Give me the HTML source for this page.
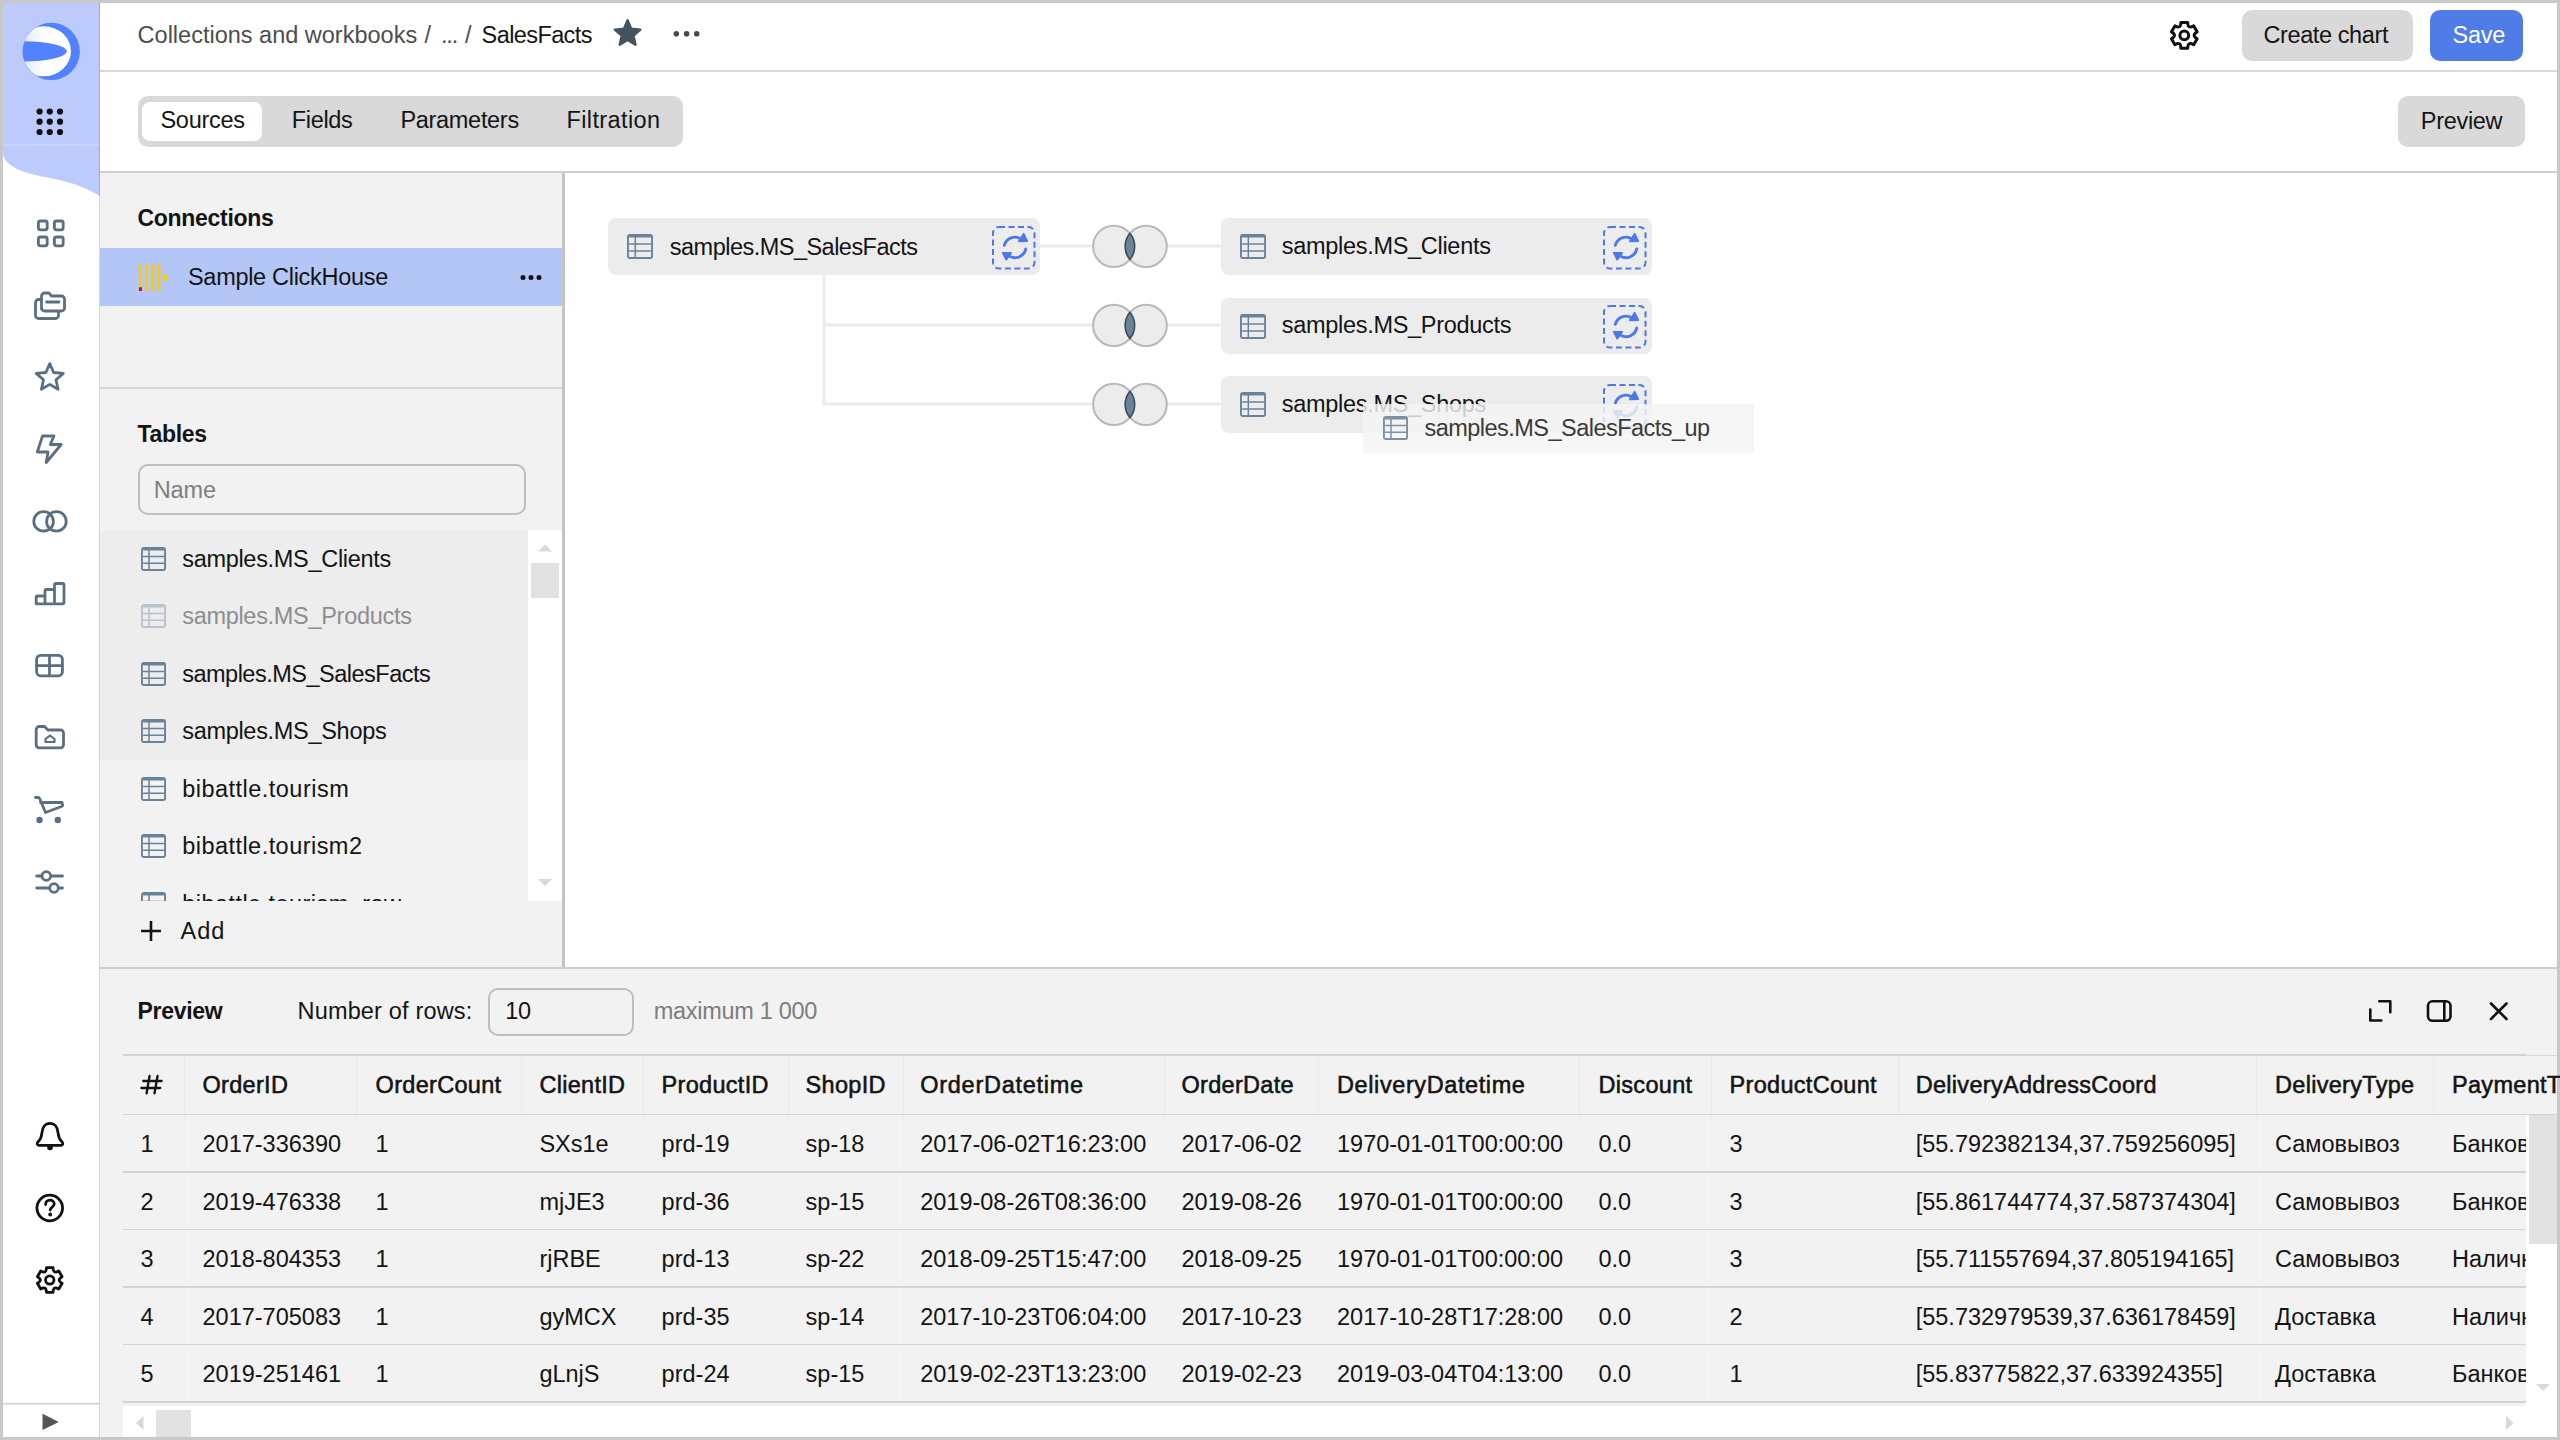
<!DOCTYPE html>
<html><head><meta charset="utf-8">
<style>
*{box-sizing:border-box;margin:0;padding:0}
html,body{width:2560px;height:1440px;overflow:hidden;background:#c8c8c8;font-family:"Liberation Sans",sans-serif;color:#141414}
.a{position:absolute}
.t{position:absolute;white-space:nowrap}
</style></head><body>
<div class="a" style="left:3px;top:3px;width:2554px;height:1434px;background:#fff"></div>

<div class="a" style="left:3px;top:3px;width:97px;height:1434px;background:#fff;border-right:1px solid #d6d6d6"></div>
<svg class="a" style="left:3px;top:3px" width="97" height="200" viewBox="3 3 97 200">
  <path d="M3 3 H100 V196 C90 190 75 183 55 179 C35 175 20 172 12 166 C6 162 3 158 3 152 Z" fill="#bccbfb"/>
  <line x1="3" y1="145" x2="100" y2="145" stroke="#cad6fc" stroke-width="1.5"/>
</svg>
<div class="a" style="left:99px;top:3px;width:1px;height:193px;background:#9aaedc"></div>
<svg class="a" style="left:0;top:0" width="100" height="1440" viewBox="0 0 100 1440">
  <defs>
    <linearGradient id="lg" x1="0" x2="1" y1="0" y2="0">
      <stop offset="0" stop-color="#dde5fd"/><stop offset="0.55" stop-color="#ffffff"/>
    </linearGradient>
    <clipPath id="lc"><circle cx="51.2" cy="51.4" r="28.6"/></clipPath>
  </defs>
  <circle cx="51.2" cy="51.4" r="28.7" fill="#5282ff"/>
  <ellipse cx="43.5" cy="51.3" rx="27.5" ry="25" fill="url(#lg)" clip-path="url(#lc)"/>
  <ellipse cx="23.5" cy="51.3" rx="43.3" ry="10.1" fill="#5282ff" clip-path="url(#lc)"/>
  <g fill="#111">
    <circle cx="39.6" cy="111.5" r="3.1"/><circle cx="49.8" cy="111.5" r="3.1"/><circle cx="60" cy="111.5" r="3.1"/>
    <circle cx="39.6" cy="121.7" r="3.1"/><circle cx="49.8" cy="121.7" r="3.1"/><circle cx="60" cy="121.7" r="3.1"/>
    <circle cx="39.6" cy="132" r="3.1"/><circle cx="49.8" cy="132" r="3.1"/><circle cx="60" cy="132" r="3.1"/>
  </g>
  <g fill="none" stroke="#5b6f82" stroke-width="2.8" stroke-linecap="round" stroke-linejoin="round">
    <rect x="38.4" y="221" width="8.8" height="8.8" rx="2"/>
    <rect x="54.4" y="221" width="8.8" height="8.8" rx="2"/>
    <rect x="38.4" y="237" width="8.8" height="8.8" rx="2"/>
    <rect x="54.4" y="237" width="8.8" height="8.8" rx="2"/>
    <path d="M41.5 309 V296 a3 3 0 0 1 3-3 H48 a2 2 0 0 1 1.5 .7 L51.5 296 H61.5 a3 3 0 0 1 3 3 V308 a3 3 0 0 1 -3 3 H44.5 a3 3 0 0 1 -3-3 Z"/>
    <path d="M46.5 302 H59"/>
    <path d="M41.5 299.5 H38.5 a3 3 0 0 0 -3 3 V315.5 a3 3 0 0 0 3 3 H55.5 a3 3 0 0 0 3-3 V311.5"/>
    <path d="M49.8 363.6 L53.6 372.5 L63.3 373.4 L56.0 379.8 L58.1 389.3 L49.8 384.4 L41.4 389.3 L43.5 379.8 L36.2 373.4 L45.9 372.5Z"/>
    <path d="M42.5 436 H54 L50.3 444.5 H61.2 L46.2 462.5 L48 452 H37.3 Z"/>
    <circle cx="43.6" cy="521.4" r="9.8"/><circle cx="56.4" cy="521.4" r="9.8"/>
    <path d="M36.2 603.8 V597.5 a1.5 1.5 0 0 1 1.5-1.5 H45 V591 a1.5 1.5 0 0 1 1.5-1.5 H54.5 V585 a1.5 1.5 0 0 1 1.5-1.5 H62.5 a1.5 1.5 0 0 1 1.5 1.5 V602.3 a1.5 1.5 0 0 1 -1.5 1.5 Z M45 603.8 V596 M54.5 603.8 V589.5"/>
    <rect x="36.6" y="655.4" width="25.8" height="20.4" rx="4"/>
    <path d="M49.5 655.4 V675.8 M36.6 665.6 H62.4"/>
    <path d="M36.2 744.5 V729.5 a3 3 0 0 1 3-3 H44.5 L48 730 H60.5 a3 3 0 0 1 3 3 V744.8 a3 3 0 0 1 -3 3 H39.2 a3 3 0 0 1 -3-3 Z"/>
    <path d="M45.5 742 V739 L50 735.5 L54.5 739 V742 Z" stroke-width="2.2"/>
    <path d="M35.5 797.5 H38 a2 2 0 0 1 1.8 1.2 L45.5 812.5 L61.5 806.5 a1.5 1.5 0 0 0 1-1.8 L62 802.5 H40.5"/>
    <path d="M36.7 876 H62.5 M36.7 888 H62.5"/>
  </g>
  <g fill="#5b6f82"><circle cx="39.5" cy="820" r="3.2"/><circle cx="57.8" cy="820" r="3.2"/></g>
  <g fill="#fff" stroke="#5b6f82" stroke-width="2.8"><circle cx="46.3" cy="876" r="4.3"/><circle cx="54" cy="888" r="4.3"/></g>
  <g fill="none" stroke="#111" stroke-width="2.8" stroke-linecap="round" stroke-linejoin="round">
    <path d="M38.8 1145.3 C37.2 1145.3 36.6 1143.4 37.9 1142.1 C40.6 1139.4 41.6 1137 41.9 1133 C42.3 1127 45.5 1123.3 50 1123.3 C54.5 1123.3 57.7 1127 58.1 1133 C58.4 1137 59.4 1139.4 62.1 1142.1 C63.4 1143.4 62.8 1145.3 61.2 1145.3 Z"/>
    <circle cx="49.75" cy="1208" r="12.8"/>
    <path d="M45.6 1204.5 C45.6 1201.8 47.5 1200.2 49.9 1200.2 C52.4 1200.2 54.2 1201.8 54.2 1204 C54.2 1207 50.2 1207.2 50.2 1210"/>
    <path d="M46.44 1267.64 L53.06 1267.64 Q53.00 1274.37 58.80 1270.95 L62.11 1276.69 Q56.25 1280.00 62.11 1283.31 L58.80 1289.05 Q53.00 1285.63 53.06 1292.36 L46.44 1292.36 Q46.50 1285.63 40.70 1289.05 L37.39 1283.31 Q43.25 1280.00 37.39 1276.69 L40.70 1270.95 Q46.50 1274.37 46.44 1267.64 Z"/>
    <circle cx="49.75" cy="1280" r="4.2"/>
  </g>
  <g fill="#111"><circle cx="50" cy="1147.5" r="2.8"/><circle cx="50.2" cy="1214.5" r="1.9"/></g>
  <line x1="3" y1="1403.8" x2="100" y2="1403.8" stroke="#d0d0d0" stroke-width="1.5"/>
  <path d="M42.5 1413.8 L58.8 1422 L42.5 1430 Z" fill="#555"/>
</svg>
<div class="a" style="left:100px;top:70px;width:2457.00px;height:2.00px;background:#dadada;"></div>
<div class="t" style="left:137.60px;top:20.86px;font-size:23.5px;line-height:29px;color:#4d4d4d;font-weight:400;letter-spacing:0px;">Collections and workbooks</div>
<div class="t" style="left:424.50px;top:20.86px;font-size:23.5px;line-height:29px;color:#4d4d4d;font-weight:400;letter-spacing:0px;">/</div>
<div class="t" style="left:441.00px;top:20.86px;font-size:23.5px;line-height:29px;color:#4d4d4d;font-weight:400;letter-spacing:-1.2px;">...</div>
<div class="t" style="left:465.00px;top:20.86px;font-size:23.5px;line-height:29px;color:#4d4d4d;font-weight:400;letter-spacing:0px;">/</div>
<div class="t" style="left:481.60px;top:20.86px;font-size:23.5px;line-height:29px;color:#141414;font-weight:400;letter-spacing:-0.6px;">SalesFacts</div>
<svg class="a" style="left:600px;top:10px" width="120" height="50" viewBox="600 10 120 50">
 <path d="M626.8 20.3 L630.4 28.8 L639.6 29.6 L632.7 35.7 L634.7 44.7 L626.8 40.0 L618.9 44.7 L620.9 35.7 L614.0 29.6 L623.2 28.8Z" fill="#46525f" stroke="#46525f" transform="translate(0.8 0)" stroke-width="2.4" stroke-linejoin="round"/>
 <circle cx="676.3" cy="33.8" r="2.8" fill="#4a4a4a"/><circle cx="686.6" cy="33.8" r="2.8" fill="#4a4a4a"/><circle cx="696.7" cy="33.8" r="2.8" fill="#4a4a4a"/>
</svg>
<svg class="a" style="left:2160px;top:10px" width="50" height="50" viewBox="2160 10 50 50">
 <path d="M2180.86 22.45 L2187.74 22.45 Q2187.70 29.41 2193.70 25.90 L2197.15 31.86 Q2191.10 35.30 2197.15 38.74 L2193.70 44.70 Q2187.70 41.19 2187.74 48.15 L2180.86 48.15 Q2180.90 41.19 2174.90 44.70 L2171.45 38.74 Q2177.50 35.30 2171.45 31.86 L2174.90 25.90 Q2180.90 29.41 2180.86 22.45 Z" fill="none" stroke="#111" stroke-width="3" stroke-linejoin="round"/>
 <circle cx="2184.3" cy="35.3" r="4.4" fill="none" stroke="#111" stroke-width="3"/>
</svg>
<div class="a" style="left:2242px;top:10px;width:171.00px;height:50.50px;background:#d9d9d9;border-radius:10px"></div>
<div class="t" style="left:2263.50px;top:20.86px;font-size:23.5px;line-height:29px;color:#141414;font-weight:400;letter-spacing:-0.4px;">Create chart</div>
<div class="a" style="left:2430px;top:10px;width:93.00px;height:50.50px;background:#507ce8;border-radius:10px"></div>
<div class="t" style="left:2452.60px;top:20.86px;font-size:23.5px;line-height:29px;color:#ffffff;font-weight:400;letter-spacing:-0.3px;">Save</div>
<div class="a" style="left:138px;top:96px;width:545.00px;height:51.00px;background:#d9d9d9;border-radius:10px"></div>
<div class="a" style="left:142px;top:102px;width:120.00px;height:39.00px;background:#ffffff;border-radius:8px"></div>
<div class="t" style="left:160.50px;top:105.86px;font-size:23.5px;line-height:29px;color:#141414;font-weight:400;letter-spacing:-0.3px;">Sources</div>
<div class="t" style="left:291.70px;top:105.86px;font-size:23.5px;line-height:29px;color:#141414;font-weight:400;letter-spacing:-0.3px;">Fields</div>
<div class="t" style="left:400.40px;top:105.86px;font-size:23.5px;line-height:29px;color:#141414;font-weight:400;letter-spacing:-0.3px;">Parameters</div>
<div class="t" style="left:566.40px;top:105.86px;font-size:23.5px;line-height:29px;color:#141414;font-weight:400;letter-spacing:0.4px;">Filtration</div>
<div class="a" style="left:2398px;top:96px;width:127.00px;height:51.00px;background:#d9d9d9;border-radius:10px"></div>
<div class="t" style="left:2420.80px;top:106.86px;font-size:23.5px;line-height:29px;color:#141414;font-weight:400;letter-spacing:-0.3px;">Preview</div>
<div class="a" style="left:100px;top:170.8px;width:2457.00px;height:2.50px;background:#cfcfcf;"></div>
<div class="a" style="left:100px;top:173.3px;width:462.00px;height:793.70px;background:#f2f2f2;"></div>
<div class="a" style="left:562px;top:173.3px;width:2.80px;height:793.70px;background:#c4c4c4;"></div>
<div class="t" style="left:137.50px;top:203.53px;font-size:23px;line-height:29px;color:#141414;font-weight:700;letter-spacing:-0.3px;">Connections</div>
<div class="a" style="left:100px;top:248px;width:462.00px;height:57.50px;background:#b4c6f6;"></div>
<svg class="a" style="left:136px;top:262px" width="34" height="32" viewBox="136 262 34 32">
 <g fill="#fdcc00"><rect x="138.9" y="264" width="3.1" height="27" rx="0.4"/><rect x="145" y="264" width="3.1" height="27" rx="0.4"/><rect x="151.1" y="264" width="3.1" height="27" rx="0.4"/><rect x="157.2" y="264" width="3.1" height="27" rx="0.4"/><rect x="163.3" y="274.2" width="3.5" height="6.6" rx="0.6"/></g>
 <rect x="138.9" y="287.3" width="3.1" height="3.7" fill="#ff0000"/>
</svg>
<div class="t" style="left:188.00px;top:262.86px;font-size:23.5px;line-height:29px;color:#141414;font-weight:400;letter-spacing:-0.3px;">Sample ClickHouse</div>
<svg class="a" style="left:516px;top:270px" width="30" height="15" viewBox="516 270 30 15"><circle cx="523" cy="277.5" r="2.5" fill="#111"/><circle cx="531" cy="277.5" r="2.5" fill="#111"/><circle cx="539" cy="277.5" r="2.5" fill="#111"/></svg>
<div class="a" style="left:100px;top:387.3px;width:462.00px;height:1.50px;background:#d6d6d6;"></div>
<div class="t" style="left:137.50px;top:419.53px;font-size:23px;line-height:29px;color:#141414;font-weight:700;letter-spacing:-0.3px;">Tables</div>
<div class="a" style="left:138px;top:464.3px;width:387.50px;height:50.30px;background:transparent;border:2px solid #bebebe;border-radius:10px"></div>
<div class="t" style="left:153.75px;top:476.36px;font-size:23.5px;line-height:29px;color:#7f7f7f;font-weight:400;letter-spacing:-0.1px;">Name</div>
<div class="a" style="left:100px;top:530px;width:428px;height:371px;overflow:hidden">
<div class="a" style="left:0;top:0.0px;width:428px;height:57.5px;background:#ededed"></div>
<svg class="a" style="left:41.25px;top:16.5px" width="25" height="24" viewBox="0 0 25 24"><rect x="0.95" y="0.95" width="23.1" height="22.1" rx="1.8" fill="none" stroke="#6a8299" stroke-width="1.9"/><path d="M2.6 2.63 H22.4 M2.6 9.48 H22.4 M2.6 16.32 H22.4 M8.00 2.63 V22.5" stroke="#6a8299" stroke-width="1.5" fill="none" stroke-linecap="round"/></svg>
<div class="t" style="left:82.2px;top:14.86px;font-size:23.5px;line-height:29px;color:#141414;letter-spacing:-0.3px">samples.MS_Clients</div>
<div class="a" style="left:0;top:57.5px;width:428px;height:57.5px;background:#ededed"></div>
<svg class="a" style="left:41.25px;top:74.0px" width="25" height="24" viewBox="0 0 25 24"><rect x="0.95" y="0.95" width="23.1" height="22.1" rx="1.8" fill="none" stroke="#b8c3ce" stroke-width="1.9"/><path d="M2.6 2.63 H22.4 M2.6 9.48 H22.4 M2.6 16.32 H22.4 M8.00 2.63 V22.5" stroke="#b8c3ce" stroke-width="1.5" fill="none" stroke-linecap="round"/></svg>
<div class="t" style="left:82.2px;top:72.36px;font-size:23.5px;line-height:29px;color:#8e8e8e;letter-spacing:-0.3px">samples.MS_Products</div>
<div class="a" style="left:0;top:115.0px;width:428px;height:57.5px;background:#ededed"></div>
<svg class="a" style="left:41.25px;top:131.5px" width="25" height="24" viewBox="0 0 25 24"><rect x="0.95" y="0.95" width="23.1" height="22.1" rx="1.8" fill="none" stroke="#6a8299" stroke-width="1.9"/><path d="M2.6 2.63 H22.4 M2.6 9.48 H22.4 M2.6 16.32 H22.4 M8.00 2.63 V22.5" stroke="#6a8299" stroke-width="1.5" fill="none" stroke-linecap="round"/></svg>
<div class="t" style="left:82.2px;top:129.86px;font-size:23.5px;line-height:29px;color:#141414;letter-spacing:-0.5px">samples.MS_SalesFacts</div>
<div class="a" style="left:0;top:172.5px;width:428px;height:57.5px;background:#ededed"></div>
<svg class="a" style="left:41.25px;top:189.0px" width="25" height="24" viewBox="0 0 25 24"><rect x="0.95" y="0.95" width="23.1" height="22.1" rx="1.8" fill="none" stroke="#6a8299" stroke-width="1.9"/><path d="M2.6 2.63 H22.4 M2.6 9.48 H22.4 M2.6 16.32 H22.4 M8.00 2.63 V22.5" stroke="#6a8299" stroke-width="1.5" fill="none" stroke-linecap="round"/></svg>
<div class="t" style="left:82.2px;top:187.36px;font-size:23.5px;line-height:29px;color:#141414;letter-spacing:-0.3px">samples.MS_Shops</div>
<svg class="a" style="left:41.25px;top:246.5px" width="25" height="24" viewBox="0 0 25 24"><rect x="0.95" y="0.95" width="23.1" height="22.1" rx="1.8" fill="none" stroke="#6a8299" stroke-width="1.9"/><path d="M2.6 2.63 H22.4 M2.6 9.48 H22.4 M2.6 16.32 H22.4 M8.00 2.63 V22.5" stroke="#6a8299" stroke-width="1.5" fill="none" stroke-linecap="round"/></svg>
<div class="t" style="left:82.2px;top:244.86px;font-size:23.5px;line-height:29px;color:#141414;letter-spacing:0.48px">bibattle.tourism</div>
<svg class="a" style="left:41.25px;top:304.0px" width="25" height="24" viewBox="0 0 25 24"><rect x="0.95" y="0.95" width="23.1" height="22.1" rx="1.8" fill="none" stroke="#6a8299" stroke-width="1.9"/><path d="M2.6 2.63 H22.4 M2.6 9.48 H22.4 M2.6 16.32 H22.4 M8.00 2.63 V22.5" stroke="#6a8299" stroke-width="1.5" fill="none" stroke-linecap="round"/></svg>
<div class="t" style="left:82.2px;top:302.36px;font-size:23.5px;line-height:29px;color:#141414;letter-spacing:0.46px">bibattle.tourism2</div>
<svg class="a" style="left:41.25px;top:361.5px" width="25" height="24" viewBox="0 0 25 24"><rect x="0.95" y="0.95" width="23.1" height="22.1" rx="1.8" fill="none" stroke="#6a8299" stroke-width="1.9"/><path d="M2.6 2.63 H22.4 M2.6 9.48 H22.4 M2.6 16.32 H22.4 M8.00 2.63 V22.5" stroke="#6a8299" stroke-width="1.5" fill="none" stroke-linecap="round"/></svg>
<div class="t" style="left:82.2px;top:359.86px;font-size:23.5px;line-height:29px;color:#141414;letter-spacing:0.45px">bibattle.tourism_raw</div>
</div>
<div class="a" style="left:528px;top:530px;width:34.00px;height:371.00px;background:#ffffff;"></div>
<div class="a" style="left:531px;top:563px;width:28.00px;height:34.50px;background:#e1e1e1;"></div>
<svg class="a" style="left:535px;top:540px" width="20" height="350" viewBox="535 540 20 350"><path d="M538 551.5 L545 544.5 L552 551.5Z" fill="#d9d9d9"/><path d="M538 879 L545 886 L552 879Z" fill="#d9d9d9"/></svg>
<svg class="a" style="left:138px;top:918px" width="26" height="26" viewBox="138 918 26 26"><path d="M151 921 V941 M141 931 H161" stroke="#141414" stroke-width="2.6" fill="none"/></svg>
<div class="t" style="left:180.60px;top:916.76px;font-size:23.5px;line-height:29px;color:#141414;font-weight:400;letter-spacing:0.9px;">Add</div>
<svg class="a" style="left:565px;top:173px" width="1992" height="794" viewBox="565 173 1992 794">
 <g stroke="#ebebeb" stroke-width="3" fill="none">
  <path d="M1040 246 H1095 M1165 246 H1222"/>
  <path d="M824 275 V404 H1095 M824 325 H1095 M1165 325 H1222 M1165 404 H1222"/>
 </g>

 <circle cx="1113.8" cy="246.4" r="20.7" fill="#ececec" stroke="#b8b8b8" stroke-width="2"/>
 <circle cx="1146.1" cy="246.4" r="20.7" fill="#ececec" stroke="#b8b8b8" stroke-width="2"/>
 <path d="M1129.95 233.20 A20.7 20.7 0 0 1 1129.95 259.60 A20.7 20.7 0 0 1 1129.95 233.20 Z" fill="#6a829a" stroke="#3a4957" stroke-width="1.5" stroke-linejoin="round"/>
 <circle cx="1113.8" cy="325.4" r="20.7" fill="#ececec" stroke="#b8b8b8" stroke-width="2"/>
 <circle cx="1146.1" cy="325.4" r="20.7" fill="#ececec" stroke="#b8b8b8" stroke-width="2"/>
 <path d="M1129.95 312.20 A20.7 20.7 0 0 1 1129.95 338.60 A20.7 20.7 0 0 1 1129.95 312.20 Z" fill="#6a829a" stroke="#3a4957" stroke-width="1.5" stroke-linejoin="round"/>
 <circle cx="1113.8" cy="404.4" r="20.7" fill="#ececec" stroke="#b8b8b8" stroke-width="2"/>
 <circle cx="1146.1" cy="404.4" r="20.7" fill="#ececec" stroke="#b8b8b8" stroke-width="2"/>
 <path d="M1129.95 391.20 A20.7 20.7 0 0 1 1129.95 417.60 A20.7 20.7 0 0 1 1129.95 391.20 Z" fill="#6a829a" stroke="#3a4957" stroke-width="1.5" stroke-linejoin="round"/>
</svg>
<div class="a" style="left:608px;top:217.7px;width:432.00px;height:57.10px;background:#ececec;border-radius:8px"></div>
<svg class="a" style="left:627px;top:233.95px" width="26" height="25" viewBox="0 0 26 25"><rect x="0.95" y="0.95" width="24.1" height="23.1" rx="1.8" fill="none" stroke="#6a8299" stroke-width="1.9"/><path d="M2.6 2.70 H23.4 M2.6 9.88 H23.4 M2.6 17.00 H23.4 M8.32 2.70 V23.5" stroke="#6a8299" stroke-width="1.5" fill="none" stroke-linecap="round"/></svg>
<div class="t" style="left:669.80px;top:232.56px;font-size:23.5px;line-height:29px;color:#141414;font-weight:400;letter-spacing:-0.52px;">samples.MS_SalesFacts</div>
<svg class="a" style="left:991.5px;top:225.5px" width="44" height="44" viewBox="0 0 44 44">
 <rect x="1" y="1" width="41.5" height="41.5" rx="6" fill="none" stroke="#4d79e6" stroke-width="2" stroke-dasharray="6 3.5"/>
 <path d="M12.3 19.3 A11 11 0 0 1 29.2 13.2" fill="none" stroke="#4d79e6" stroke-width="2.9" stroke-linecap="round"/>
 <path d="M31.7 7.8 L35.2 15.1 L26.9 15.3 Z" fill="#4d79e6" stroke="#4d79e6" stroke-width="1.8" stroke-linejoin="round"/>
 <path d="M33.8 22.9 A11 11 0 0 1 17.6 30.3" fill="none" stroke="#4d79e6" stroke-width="2.9" stroke-linecap="round"/>
 <path d="M10.8 26.9 L19.1 26.9 L14.2 33.6 Z" fill="#4d79e6" stroke="#4d79e6" stroke-width="1.8" stroke-linejoin="round"/>
</svg>
<div class="a" style="left:1221px;top:218px;width:431.40px;height:56.60px;background:#ececec;border-radius:8px"></div>
<svg class="a" style="left:1240.4px;top:234.0px" width="26" height="25" viewBox="0 0 26 25"><rect x="0.95" y="0.95" width="24.1" height="23.1" rx="1.8" fill="none" stroke="#6a8299" stroke-width="1.9"/><path d="M2.6 2.70 H23.4 M2.6 9.88 H23.4 M2.6 17.00 H23.4 M8.32 2.70 V23.5" stroke="#6a8299" stroke-width="1.5" fill="none" stroke-linecap="round"/></svg>
<div class="t" style="left:1281.80px;top:232.36px;font-size:23.5px;line-height:29px;color:#141414;font-weight:400;letter-spacing:-0.3px;">samples.MS_Clients</div>
<svg class="a" style="left:1602.7px;top:225.7px" width="44" height="44" viewBox="0 0 44 44">
 <rect x="1" y="1" width="41.5" height="41.5" rx="6" fill="none" stroke="#4d79e6" stroke-width="2" stroke-dasharray="6 3.5"/>
 <path d="M12.3 19.3 A11 11 0 0 1 29.2 13.2" fill="none" stroke="#4d79e6" stroke-width="2.9" stroke-linecap="round"/>
 <path d="M31.7 7.8 L35.2 15.1 L26.9 15.3 Z" fill="#4d79e6" stroke="#4d79e6" stroke-width="1.8" stroke-linejoin="round"/>
 <path d="M33.8 22.9 A11 11 0 0 1 17.6 30.3" fill="none" stroke="#4d79e6" stroke-width="2.9" stroke-linecap="round"/>
 <path d="M10.8 26.9 L19.1 26.9 L14.2 33.6 Z" fill="#4d79e6" stroke="#4d79e6" stroke-width="1.8" stroke-linejoin="round"/>
</svg>
<div class="a" style="left:1221px;top:297.8px;width:431.40px;height:56.70px;background:#ececec;border-radius:8px"></div>
<svg class="a" style="left:1240.4px;top:313.84999999999997px" width="26" height="25" viewBox="0 0 26 25"><rect x="0.95" y="0.95" width="24.1" height="23.1" rx="1.8" fill="none" stroke="#6a8299" stroke-width="1.9"/><path d="M2.6 2.70 H23.4 M2.6 9.88 H23.4 M2.6 17.00 H23.4 M8.32 2.70 V23.5" stroke="#6a8299" stroke-width="1.5" fill="none" stroke-linecap="round"/></svg>
<div class="t" style="left:1281.80px;top:311.26px;font-size:23.5px;line-height:29px;color:#141414;font-weight:400;letter-spacing:-0.3px;">samples.MS_Products</div>
<svg class="a" style="left:1602.7px;top:305.0px" width="44" height="44" viewBox="0 0 44 44">
 <rect x="1" y="1" width="41.5" height="41.5" rx="6" fill="none" stroke="#4d79e6" stroke-width="2" stroke-dasharray="6 3.5"/>
 <path d="M12.3 19.3 A11 11 0 0 1 29.2 13.2" fill="none" stroke="#4d79e6" stroke-width="2.9" stroke-linecap="round"/>
 <path d="M31.7 7.8 L35.2 15.1 L26.9 15.3 Z" fill="#4d79e6" stroke="#4d79e6" stroke-width="1.8" stroke-linejoin="round"/>
 <path d="M33.8 22.9 A11 11 0 0 1 17.6 30.3" fill="none" stroke="#4d79e6" stroke-width="2.9" stroke-linecap="round"/>
 <path d="M10.8 26.9 L19.1 26.9 L14.2 33.6 Z" fill="#4d79e6" stroke="#4d79e6" stroke-width="1.8" stroke-linejoin="round"/>
</svg>
<div class="a" style="left:1221px;top:376.3px;width:431.40px;height:56.70px;background:#ececec;border-radius:8px"></div>
<svg class="a" style="left:1240.4px;top:392.34999999999997px" width="26" height="25" viewBox="0 0 26 25"><rect x="0.95" y="0.95" width="24.1" height="23.1" rx="1.8" fill="none" stroke="#6a8299" stroke-width="1.9"/><path d="M2.6 2.70 H23.4 M2.6 9.88 H23.4 M2.6 17.00 H23.4 M8.32 2.70 V23.5" stroke="#6a8299" stroke-width="1.5" fill="none" stroke-linecap="round"/></svg>
<div class="t" style="left:1281.80px;top:390.46px;font-size:23.5px;line-height:29px;color:#141414;font-weight:400;letter-spacing:-0.3px;">samples.MS_Shops</div>
<svg class="a" style="left:1602.7px;top:383.7px" width="44" height="44" viewBox="0 0 44 44">
 <rect x="1" y="1" width="41.5" height="41.5" rx="6" fill="none" stroke="#4d79e6" stroke-width="2" stroke-dasharray="6 3.5"/>
 <path d="M12.3 19.3 A11 11 0 0 1 29.2 13.2" fill="none" stroke="#4d79e6" stroke-width="2.9" stroke-linecap="round"/>
 <path d="M31.7 7.8 L35.2 15.1 L26.9 15.3 Z" fill="#4d79e6" stroke="#4d79e6" stroke-width="1.8" stroke-linejoin="round"/>
 <path d="M33.8 22.9 A11 11 0 0 1 17.6 30.3" fill="none" stroke="#4d79e6" stroke-width="2.9" stroke-linecap="round"/>
 <path d="M10.8 26.9 L19.1 26.9 L14.2 33.6 Z" fill="#4d79e6" stroke="#4d79e6" stroke-width="1.8" stroke-linejoin="round"/>
</svg>
<div class="a" style="left:1363px;top:404px;width:391.00px;height:48.60px;background:rgba(244,244,244,0.82);"></div>
<svg class="a" style="left:1383px;top:416px" width="25" height="24" viewBox="0 0 25 24"><rect x="0.95" y="0.95" width="23.1" height="22.1" rx="1.8" fill="none" stroke="#7d90a3" stroke-width="1.9"/><path d="M2.6 2.63 H22.4 M2.6 9.48 H22.4 M2.6 16.32 H22.4 M8.00 2.63 V22.5" stroke="#7d90a3" stroke-width="1.5" fill="none" stroke-linecap="round"/></svg>
<div class="t" style="left:1424.50px;top:414.16px;font-size:23.5px;line-height:29px;color:#3a3a3a;font-weight:400;letter-spacing:-0.53px;">samples.MS_SalesFacts_up</div>
<div class="a" style="left:100px;top:966.5px;width:2457.00px;height:2.50px;background:#cdcdcd;"></div>
<div class="a" style="left:100px;top:969px;width:2457.00px;height:468.00px;background:#f2f2f2;"></div>
<div class="t" style="left:137.50px;top:996.93px;font-size:23px;line-height:29px;color:#141414;font-weight:700;letter-spacing:-0.3px;">Preview</div>
<div class="t" style="left:297.50px;top:996.76px;font-size:23.5px;line-height:29px;color:#141414;font-weight:400;letter-spacing:0.17px;">Number of rows:</div>
<div class="a" style="left:488.4px;top:987.5px;width:146.00px;height:48.50px;background:transparent;border:2px solid #bebebe;border-radius:10px"></div>
<div class="t" style="left:505.30px;top:996.76px;font-size:23.5px;line-height:29px;color:#141414;font-weight:400;letter-spacing:-0.3px;">10</div>
<div class="t" style="left:653.75px;top:996.76px;font-size:23.5px;line-height:29px;color:#7d7d7d;font-weight:400;letter-spacing:-0.3px;">maximum 1 000</div>
<svg class="a" style="left:2360px;top:990px" width="160" height="42" viewBox="2360 990 160 42">
 <g fill="none" stroke="#111" stroke-width="2.6" stroke-linejoin="round">
  <path d="M2370.3 1009.5 V1020.5 H2381.3" stroke-linecap="round"/>
  <path d="M2379.3 1001.3 H2390.3 V1012.3" stroke-linecap="round"/>
  <rect x="2428" y="1001.3" width="22.5" height="19.5" rx="4.5"/>
  <path d="M2444.3 1001.3 V1020.8"/>
  <path d="M2491 1003.5 L2506.5 1019 M2506.5 1003.5 L2491 1019" stroke-linecap="round"/>
 </g>
</svg>
<div class="a" style="left:123px;top:1054px;width:2403.00px;height:1.50px;background:#d3d3d3;"></div>
<div class="a" style="left:2526px;top:1055px;width:31.00px;height:1.00px;background:#dadada;"></div>
<div class="a" style="left:123px;top:1113.8px;width:2434.00px;height:1.50px;background:#d3d3d3;"></div>
<div class="a" style="left:183.5px;top:1055.5px;width:1.00px;height:58.30px;background:#eaeaea;"></div>
<div class="a" style="left:356px;top:1055.5px;width:1.00px;height:58.30px;background:#eaeaea;"></div>
<div class="a" style="left:521px;top:1055.5px;width:1.00px;height:58.30px;background:#eaeaea;"></div>
<div class="a" style="left:643px;top:1055.5px;width:1.00px;height:58.30px;background:#eaeaea;"></div>
<div class="a" style="left:787.5px;top:1055.5px;width:1.00px;height:58.30px;background:#eaeaea;"></div>
<div class="a" style="left:902.5px;top:1055.5px;width:1.00px;height:58.30px;background:#eaeaea;"></div>
<div class="a" style="left:1163.5px;top:1055.5px;width:1.00px;height:58.30px;background:#eaeaea;"></div>
<div class="a" style="left:1318px;top:1055.5px;width:1.00px;height:58.30px;background:#eaeaea;"></div>
<div class="a" style="left:1579.4px;top:1055.5px;width:1.00px;height:58.30px;background:#eaeaea;"></div>
<div class="a" style="left:1710.5px;top:1055.5px;width:1.00px;height:58.30px;background:#eaeaea;"></div>
<div class="a" style="left:1897.5px;top:1055.5px;width:1.00px;height:58.30px;background:#eaeaea;"></div>
<div class="a" style="left:2256px;top:1055.5px;width:1.00px;height:58.30px;background:#eaeaea;"></div>
<div class="a" style="left:2433px;top:1055.5px;width:1.00px;height:58.30px;background:#eaeaea;"></div>
<svg class="a" style="left:135px;top:1070px" width="32" height="30" viewBox="135 1070 32 30"><path d="M149.6 1075.8 L146.6 1093.3 M157.6 1075.8 L154.5 1093.3 M143.3 1081 H161.6 M141.4 1088 H160.2" stroke="#111" stroke-width="2.3" stroke-linecap="round" fill="none"/></svg>
<div class="t" style="left:202.50px;top:1070.96px;font-size:23.5px;line-height:29px;color:#141414;font-weight:400;letter-spacing:0.3px;-webkit-text-stroke:0.55px #141414">OrderID</div>
<div class="t" style="left:375.60px;top:1070.96px;font-size:23.5px;line-height:29px;color:#141414;font-weight:400;letter-spacing:0.3px;-webkit-text-stroke:0.55px #141414">OrderCount</div>
<div class="t" style="left:539.40px;top:1070.96px;font-size:23.5px;line-height:29px;color:#141414;font-weight:400;letter-spacing:0.3px;-webkit-text-stroke:0.55px #141414">ClientID</div>
<div class="t" style="left:661.60px;top:1070.96px;font-size:23.5px;line-height:29px;color:#141414;font-weight:400;letter-spacing:0.3px;-webkit-text-stroke:0.55px #141414">ProductID</div>
<div class="t" style="left:805.60px;top:1070.96px;font-size:23.5px;line-height:29px;color:#141414;font-weight:400;letter-spacing:0.3px;-webkit-text-stroke:0.55px #141414">ShopID</div>
<div class="t" style="left:920.20px;top:1070.96px;font-size:23.5px;line-height:29px;color:#141414;font-weight:400;letter-spacing:0.74px;-webkit-text-stroke:0.55px #141414">OrderDatetime</div>
<div class="t" style="left:1181.50px;top:1070.96px;font-size:23.5px;line-height:29px;color:#141414;font-weight:400;letter-spacing:0.3px;-webkit-text-stroke:0.55px #141414">OrderDate</div>
<div class="t" style="left:1337.00px;top:1070.96px;font-size:23.5px;line-height:29px;color:#141414;font-weight:400;letter-spacing:0.6px;-webkit-text-stroke:0.55px #141414">DeliveryDatetime</div>
<div class="t" style="left:1598.50px;top:1070.96px;font-size:23.5px;line-height:29px;color:#141414;font-weight:400;letter-spacing:0.3px;-webkit-text-stroke:0.55px #141414">Discount</div>
<div class="t" style="left:1729.60px;top:1070.96px;font-size:23.5px;line-height:29px;color:#141414;font-weight:400;letter-spacing:0.3px;-webkit-text-stroke:0.55px #141414">ProductCount</div>
<div class="t" style="left:1915.70px;top:1070.96px;font-size:23.5px;line-height:29px;color:#141414;font-weight:400;letter-spacing:0.3px;-webkit-text-stroke:0.55px #141414">DeliveryAddressCoord</div>
<div class="t" style="left:2275.00px;top:1070.96px;font-size:23.5px;line-height:29px;color:#141414;font-weight:400;letter-spacing:0.3px;-webkit-text-stroke:0.55px #141414">DeliveryType</div>
<div class="t" style="left:2452.00px;top:1070.96px;font-size:23.5px;line-height:29px;color:#141414;font-weight:400;letter-spacing:0.3px;-webkit-text-stroke:0.55px #141414">PaymentType</div>
<div class="a" style="left:0;top:0;width:2526px;height:1406px;overflow:hidden">
<div class="a" style="left:123px;top:1171px;width:2403.00px;height:1.50px;background:#d3d3d3;"></div>
<div class="a" style="left:183.5px;top:1115px;width:1.00px;height:56.00px;background:#efefef;"></div>
<div class="a" style="left:356px;top:1115px;width:1.00px;height:56.00px;background:#efefef;"></div>
<div class="a" style="left:521px;top:1115px;width:1.00px;height:56.00px;background:#efefef;"></div>
<div class="a" style="left:643px;top:1115px;width:1.00px;height:56.00px;background:#efefef;"></div>
<div class="a" style="left:787.5px;top:1115px;width:1.00px;height:56.00px;background:#efefef;"></div>
<div class="a" style="left:902.5px;top:1115px;width:1.00px;height:56.00px;background:#efefef;"></div>
<div class="a" style="left:1163.5px;top:1115px;width:1.00px;height:56.00px;background:#efefef;"></div>
<div class="a" style="left:1318px;top:1115px;width:1.00px;height:56.00px;background:#efefef;"></div>
<div class="a" style="left:1579.4px;top:1115px;width:1.00px;height:56.00px;background:#efefef;"></div>
<div class="a" style="left:1710.5px;top:1115px;width:1.00px;height:56.00px;background:#efefef;"></div>
<div class="a" style="left:1897.5px;top:1115px;width:1.00px;height:56.00px;background:#efefef;"></div>
<div class="a" style="left:2256px;top:1115px;width:1.00px;height:56.00px;background:#efefef;"></div>
<div class="a" style="left:2433px;top:1115px;width:1.00px;height:56.00px;background:#efefef;"></div>
<div class="t" style="left:140.60px;top:1130.16px;font-size:23.5px;line-height:29px;color:#141414;font-weight:400;letter-spacing:0px;">1</div>
<div class="t" style="left:202.50px;top:1130.16px;font-size:23.5px;line-height:29px;color:#141414;font-weight:400;letter-spacing:0px;">2017-336390</div>
<div class="t" style="left:375.60px;top:1130.16px;font-size:23.5px;line-height:29px;color:#141414;font-weight:400;letter-spacing:0px;">1</div>
<div class="t" style="left:539.40px;top:1130.16px;font-size:23.5px;line-height:29px;color:#141414;font-weight:400;letter-spacing:0px;">SXs1e</div>
<div class="t" style="left:661.60px;top:1130.16px;font-size:23.5px;line-height:29px;color:#141414;font-weight:400;letter-spacing:0px;">prd-19</div>
<div class="t" style="left:805.60px;top:1130.16px;font-size:23.5px;line-height:29px;color:#141414;font-weight:400;letter-spacing:0px;">sp-18</div>
<div class="t" style="left:920.20px;top:1130.16px;font-size:23.5px;line-height:29px;color:#141414;font-weight:400;letter-spacing:0px;">2017-06-02T16:23:00</div>
<div class="t" style="left:1181.50px;top:1130.16px;font-size:23.5px;line-height:29px;color:#141414;font-weight:400;letter-spacing:0px;">2017-06-02</div>
<div class="t" style="left:1337.00px;top:1130.16px;font-size:23.5px;line-height:29px;color:#141414;font-weight:400;letter-spacing:0px;">1970-01-01T00:00:00</div>
<div class="t" style="left:1598.50px;top:1130.16px;font-size:23.5px;line-height:29px;color:#141414;font-weight:400;letter-spacing:0px;">0.0</div>
<div class="t" style="left:1729.60px;top:1130.16px;font-size:23.5px;line-height:29px;color:#141414;font-weight:400;letter-spacing:0px;">3</div>
<div class="t" style="left:1915.70px;top:1130.16px;font-size:23.5px;line-height:29px;color:#141414;font-weight:400;letter-spacing:0px;">[55.792382134,37.759256095]</div>
<div class="t" style="left:2275.00px;top:1130.16px;font-size:23.5px;line-height:29px;color:#141414;font-weight:400;letter-spacing:0px;">Самовывоз</div>
<div class="t" style="left:2452.00px;top:1130.16px;font-size:23.5px;line-height:29px;color:#141414;font-weight:400;letter-spacing:0px;">Банковская карта</div>
<div class="a" style="left:123px;top:1228.5px;width:2403.00px;height:1.50px;background:#d3d3d3;"></div>
<div class="a" style="left:183.5px;top:1172.5px;width:1.00px;height:56.00px;background:#efefef;"></div>
<div class="a" style="left:356px;top:1172.5px;width:1.00px;height:56.00px;background:#efefef;"></div>
<div class="a" style="left:521px;top:1172.5px;width:1.00px;height:56.00px;background:#efefef;"></div>
<div class="a" style="left:643px;top:1172.5px;width:1.00px;height:56.00px;background:#efefef;"></div>
<div class="a" style="left:787.5px;top:1172.5px;width:1.00px;height:56.00px;background:#efefef;"></div>
<div class="a" style="left:902.5px;top:1172.5px;width:1.00px;height:56.00px;background:#efefef;"></div>
<div class="a" style="left:1163.5px;top:1172.5px;width:1.00px;height:56.00px;background:#efefef;"></div>
<div class="a" style="left:1318px;top:1172.5px;width:1.00px;height:56.00px;background:#efefef;"></div>
<div class="a" style="left:1579.4px;top:1172.5px;width:1.00px;height:56.00px;background:#efefef;"></div>
<div class="a" style="left:1710.5px;top:1172.5px;width:1.00px;height:56.00px;background:#efefef;"></div>
<div class="a" style="left:1897.5px;top:1172.5px;width:1.00px;height:56.00px;background:#efefef;"></div>
<div class="a" style="left:2256px;top:1172.5px;width:1.00px;height:56.00px;background:#efefef;"></div>
<div class="a" style="left:2433px;top:1172.5px;width:1.00px;height:56.00px;background:#efefef;"></div>
<div class="t" style="left:140.60px;top:1187.66px;font-size:23.5px;line-height:29px;color:#141414;font-weight:400;letter-spacing:0px;">2</div>
<div class="t" style="left:202.50px;top:1187.66px;font-size:23.5px;line-height:29px;color:#141414;font-weight:400;letter-spacing:0px;">2019-476338</div>
<div class="t" style="left:375.60px;top:1187.66px;font-size:23.5px;line-height:29px;color:#141414;font-weight:400;letter-spacing:0px;">1</div>
<div class="t" style="left:539.40px;top:1187.66px;font-size:23.5px;line-height:29px;color:#141414;font-weight:400;letter-spacing:0px;">mjJE3</div>
<div class="t" style="left:661.60px;top:1187.66px;font-size:23.5px;line-height:29px;color:#141414;font-weight:400;letter-spacing:0px;">prd-36</div>
<div class="t" style="left:805.60px;top:1187.66px;font-size:23.5px;line-height:29px;color:#141414;font-weight:400;letter-spacing:0px;">sp-15</div>
<div class="t" style="left:920.20px;top:1187.66px;font-size:23.5px;line-height:29px;color:#141414;font-weight:400;letter-spacing:0px;">2019-08-26T08:36:00</div>
<div class="t" style="left:1181.50px;top:1187.66px;font-size:23.5px;line-height:29px;color:#141414;font-weight:400;letter-spacing:0px;">2019-08-26</div>
<div class="t" style="left:1337.00px;top:1187.66px;font-size:23.5px;line-height:29px;color:#141414;font-weight:400;letter-spacing:0px;">1970-01-01T00:00:00</div>
<div class="t" style="left:1598.50px;top:1187.66px;font-size:23.5px;line-height:29px;color:#141414;font-weight:400;letter-spacing:0px;">0.0</div>
<div class="t" style="left:1729.60px;top:1187.66px;font-size:23.5px;line-height:29px;color:#141414;font-weight:400;letter-spacing:0px;">3</div>
<div class="t" style="left:1915.70px;top:1187.66px;font-size:23.5px;line-height:29px;color:#141414;font-weight:400;letter-spacing:0px;">[55.861744774,37.587374304]</div>
<div class="t" style="left:2275.00px;top:1187.66px;font-size:23.5px;line-height:29px;color:#141414;font-weight:400;letter-spacing:0px;">Самовывоз</div>
<div class="t" style="left:2452.00px;top:1187.66px;font-size:23.5px;line-height:29px;color:#141414;font-weight:400;letter-spacing:0px;">Банковская карта</div>
<div class="a" style="left:123px;top:1286px;width:2403.00px;height:1.50px;background:#d3d3d3;"></div>
<div class="a" style="left:183.5px;top:1230px;width:1.00px;height:56.00px;background:#efefef;"></div>
<div class="a" style="left:356px;top:1230px;width:1.00px;height:56.00px;background:#efefef;"></div>
<div class="a" style="left:521px;top:1230px;width:1.00px;height:56.00px;background:#efefef;"></div>
<div class="a" style="left:643px;top:1230px;width:1.00px;height:56.00px;background:#efefef;"></div>
<div class="a" style="left:787.5px;top:1230px;width:1.00px;height:56.00px;background:#efefef;"></div>
<div class="a" style="left:902.5px;top:1230px;width:1.00px;height:56.00px;background:#efefef;"></div>
<div class="a" style="left:1163.5px;top:1230px;width:1.00px;height:56.00px;background:#efefef;"></div>
<div class="a" style="left:1318px;top:1230px;width:1.00px;height:56.00px;background:#efefef;"></div>
<div class="a" style="left:1579.4px;top:1230px;width:1.00px;height:56.00px;background:#efefef;"></div>
<div class="a" style="left:1710.5px;top:1230px;width:1.00px;height:56.00px;background:#efefef;"></div>
<div class="a" style="left:1897.5px;top:1230px;width:1.00px;height:56.00px;background:#efefef;"></div>
<div class="a" style="left:2256px;top:1230px;width:1.00px;height:56.00px;background:#efefef;"></div>
<div class="a" style="left:2433px;top:1230px;width:1.00px;height:56.00px;background:#efefef;"></div>
<div class="t" style="left:140.60px;top:1245.16px;font-size:23.5px;line-height:29px;color:#141414;font-weight:400;letter-spacing:0px;">3</div>
<div class="t" style="left:202.50px;top:1245.16px;font-size:23.5px;line-height:29px;color:#141414;font-weight:400;letter-spacing:0px;">2018-804353</div>
<div class="t" style="left:375.60px;top:1245.16px;font-size:23.5px;line-height:29px;color:#141414;font-weight:400;letter-spacing:0px;">1</div>
<div class="t" style="left:539.40px;top:1245.16px;font-size:23.5px;line-height:29px;color:#141414;font-weight:400;letter-spacing:0px;">rjRBE</div>
<div class="t" style="left:661.60px;top:1245.16px;font-size:23.5px;line-height:29px;color:#141414;font-weight:400;letter-spacing:0px;">prd-13</div>
<div class="t" style="left:805.60px;top:1245.16px;font-size:23.5px;line-height:29px;color:#141414;font-weight:400;letter-spacing:0px;">sp-22</div>
<div class="t" style="left:920.20px;top:1245.16px;font-size:23.5px;line-height:29px;color:#141414;font-weight:400;letter-spacing:0px;">2018-09-25T15:47:00</div>
<div class="t" style="left:1181.50px;top:1245.16px;font-size:23.5px;line-height:29px;color:#141414;font-weight:400;letter-spacing:0px;">2018-09-25</div>
<div class="t" style="left:1337.00px;top:1245.16px;font-size:23.5px;line-height:29px;color:#141414;font-weight:400;letter-spacing:0px;">1970-01-01T00:00:00</div>
<div class="t" style="left:1598.50px;top:1245.16px;font-size:23.5px;line-height:29px;color:#141414;font-weight:400;letter-spacing:0px;">0.0</div>
<div class="t" style="left:1729.60px;top:1245.16px;font-size:23.5px;line-height:29px;color:#141414;font-weight:400;letter-spacing:0px;">3</div>
<div class="t" style="left:1915.70px;top:1245.16px;font-size:23.5px;line-height:29px;color:#141414;font-weight:400;letter-spacing:0px;">[55.711557694,37.805194165]</div>
<div class="t" style="left:2275.00px;top:1245.16px;font-size:23.5px;line-height:29px;color:#141414;font-weight:400;letter-spacing:0px;">Самовывоз</div>
<div class="t" style="left:2452.00px;top:1245.16px;font-size:23.5px;line-height:29px;color:#141414;font-weight:400;letter-spacing:0px;">Наличные</div>
<div class="a" style="left:123px;top:1343.5px;width:2403.00px;height:1.50px;background:#d3d3d3;"></div>
<div class="a" style="left:183.5px;top:1287.5px;width:1.00px;height:56.00px;background:#efefef;"></div>
<div class="a" style="left:356px;top:1287.5px;width:1.00px;height:56.00px;background:#efefef;"></div>
<div class="a" style="left:521px;top:1287.5px;width:1.00px;height:56.00px;background:#efefef;"></div>
<div class="a" style="left:643px;top:1287.5px;width:1.00px;height:56.00px;background:#efefef;"></div>
<div class="a" style="left:787.5px;top:1287.5px;width:1.00px;height:56.00px;background:#efefef;"></div>
<div class="a" style="left:902.5px;top:1287.5px;width:1.00px;height:56.00px;background:#efefef;"></div>
<div class="a" style="left:1163.5px;top:1287.5px;width:1.00px;height:56.00px;background:#efefef;"></div>
<div class="a" style="left:1318px;top:1287.5px;width:1.00px;height:56.00px;background:#efefef;"></div>
<div class="a" style="left:1579.4px;top:1287.5px;width:1.00px;height:56.00px;background:#efefef;"></div>
<div class="a" style="left:1710.5px;top:1287.5px;width:1.00px;height:56.00px;background:#efefef;"></div>
<div class="a" style="left:1897.5px;top:1287.5px;width:1.00px;height:56.00px;background:#efefef;"></div>
<div class="a" style="left:2256px;top:1287.5px;width:1.00px;height:56.00px;background:#efefef;"></div>
<div class="a" style="left:2433px;top:1287.5px;width:1.00px;height:56.00px;background:#efefef;"></div>
<div class="t" style="left:140.60px;top:1302.66px;font-size:23.5px;line-height:29px;color:#141414;font-weight:400;letter-spacing:0px;">4</div>
<div class="t" style="left:202.50px;top:1302.66px;font-size:23.5px;line-height:29px;color:#141414;font-weight:400;letter-spacing:0px;">2017-705083</div>
<div class="t" style="left:375.60px;top:1302.66px;font-size:23.5px;line-height:29px;color:#141414;font-weight:400;letter-spacing:0px;">1</div>
<div class="t" style="left:539.40px;top:1302.66px;font-size:23.5px;line-height:29px;color:#141414;font-weight:400;letter-spacing:0px;">gyMCX</div>
<div class="t" style="left:661.60px;top:1302.66px;font-size:23.5px;line-height:29px;color:#141414;font-weight:400;letter-spacing:0px;">prd-35</div>
<div class="t" style="left:805.60px;top:1302.66px;font-size:23.5px;line-height:29px;color:#141414;font-weight:400;letter-spacing:0px;">sp-14</div>
<div class="t" style="left:920.20px;top:1302.66px;font-size:23.5px;line-height:29px;color:#141414;font-weight:400;letter-spacing:0px;">2017-10-23T06:04:00</div>
<div class="t" style="left:1181.50px;top:1302.66px;font-size:23.5px;line-height:29px;color:#141414;font-weight:400;letter-spacing:0px;">2017-10-23</div>
<div class="t" style="left:1337.00px;top:1302.66px;font-size:23.5px;line-height:29px;color:#141414;font-weight:400;letter-spacing:0px;">2017-10-28T17:28:00</div>
<div class="t" style="left:1598.50px;top:1302.66px;font-size:23.5px;line-height:29px;color:#141414;font-weight:400;letter-spacing:0px;">0.0</div>
<div class="t" style="left:1729.60px;top:1302.66px;font-size:23.5px;line-height:29px;color:#141414;font-weight:400;letter-spacing:0px;">2</div>
<div class="t" style="left:1915.70px;top:1302.66px;font-size:23.5px;line-height:29px;color:#141414;font-weight:400;letter-spacing:0px;">[55.732979539,37.636178459]</div>
<div class="t" style="left:2275.00px;top:1302.66px;font-size:23.5px;line-height:29px;color:#141414;font-weight:400;letter-spacing:0px;">Доставка</div>
<div class="t" style="left:2452.00px;top:1302.66px;font-size:23.5px;line-height:29px;color:#141414;font-weight:400;letter-spacing:0px;">Наличные</div>
<div class="a" style="left:123px;top:1401px;width:2403.00px;height:1.50px;background:#d3d3d3;"></div>
<div class="a" style="left:183.5px;top:1345px;width:1.00px;height:56.00px;background:#efefef;"></div>
<div class="a" style="left:356px;top:1345px;width:1.00px;height:56.00px;background:#efefef;"></div>
<div class="a" style="left:521px;top:1345px;width:1.00px;height:56.00px;background:#efefef;"></div>
<div class="a" style="left:643px;top:1345px;width:1.00px;height:56.00px;background:#efefef;"></div>
<div class="a" style="left:787.5px;top:1345px;width:1.00px;height:56.00px;background:#efefef;"></div>
<div class="a" style="left:902.5px;top:1345px;width:1.00px;height:56.00px;background:#efefef;"></div>
<div class="a" style="left:1163.5px;top:1345px;width:1.00px;height:56.00px;background:#efefef;"></div>
<div class="a" style="left:1318px;top:1345px;width:1.00px;height:56.00px;background:#efefef;"></div>
<div class="a" style="left:1579.4px;top:1345px;width:1.00px;height:56.00px;background:#efefef;"></div>
<div class="a" style="left:1710.5px;top:1345px;width:1.00px;height:56.00px;background:#efefef;"></div>
<div class="a" style="left:1897.5px;top:1345px;width:1.00px;height:56.00px;background:#efefef;"></div>
<div class="a" style="left:2256px;top:1345px;width:1.00px;height:56.00px;background:#efefef;"></div>
<div class="a" style="left:2433px;top:1345px;width:1.00px;height:56.00px;background:#efefef;"></div>
<div class="t" style="left:140.60px;top:1360.16px;font-size:23.5px;line-height:29px;color:#141414;font-weight:400;letter-spacing:0px;">5</div>
<div class="t" style="left:202.50px;top:1360.16px;font-size:23.5px;line-height:29px;color:#141414;font-weight:400;letter-spacing:0px;">2019-251461</div>
<div class="t" style="left:375.60px;top:1360.16px;font-size:23.5px;line-height:29px;color:#141414;font-weight:400;letter-spacing:0px;">1</div>
<div class="t" style="left:539.40px;top:1360.16px;font-size:23.5px;line-height:29px;color:#141414;font-weight:400;letter-spacing:0px;">gLnjS</div>
<div class="t" style="left:661.60px;top:1360.16px;font-size:23.5px;line-height:29px;color:#141414;font-weight:400;letter-spacing:0px;">prd-24</div>
<div class="t" style="left:805.60px;top:1360.16px;font-size:23.5px;line-height:29px;color:#141414;font-weight:400;letter-spacing:0px;">sp-15</div>
<div class="t" style="left:920.20px;top:1360.16px;font-size:23.5px;line-height:29px;color:#141414;font-weight:400;letter-spacing:0px;">2019-02-23T13:23:00</div>
<div class="t" style="left:1181.50px;top:1360.16px;font-size:23.5px;line-height:29px;color:#141414;font-weight:400;letter-spacing:0px;">2019-02-23</div>
<div class="t" style="left:1337.00px;top:1360.16px;font-size:23.5px;line-height:29px;color:#141414;font-weight:400;letter-spacing:0px;">2019-03-04T04:13:00</div>
<div class="t" style="left:1598.50px;top:1360.16px;font-size:23.5px;line-height:29px;color:#141414;font-weight:400;letter-spacing:0px;">0.0</div>
<div class="t" style="left:1729.60px;top:1360.16px;font-size:23.5px;line-height:29px;color:#141414;font-weight:400;letter-spacing:0px;">1</div>
<div class="t" style="left:1915.70px;top:1360.16px;font-size:23.5px;line-height:29px;color:#141414;font-weight:400;letter-spacing:0px;">[55.83775822,37.633924355]</div>
<div class="t" style="left:2275.00px;top:1360.16px;font-size:23.5px;line-height:29px;color:#141414;font-weight:400;letter-spacing:0px;">Доставка</div>
<div class="t" style="left:2452.00px;top:1360.16px;font-size:23.5px;line-height:29px;color:#141414;font-weight:400;letter-spacing:0px;">Банковская карта</div>
</div>
<div class="a" style="left:2526px;top:1115.3px;width:31.00px;height:290.70px;background:#ffffff;"></div>
<div class="a" style="left:2529px;top:1115.3px;width:28.00px;height:129.20px;background:#e1e1e1;"></div>
<svg class="a" style="left:2530px;top:1375px" width="25" height="20" viewBox="2530 1375 25 20"><path d="M2536 1384 L2543 1391 L2550 1384Z" fill="#d9d9d9"/></svg>
<div class="a" style="left:123px;top:1406px;width:2434.00px;height:31.00px;background:#ffffff;"></div>
<div class="a" style="left:156px;top:1409.5px;width:35.00px;height:27.50px;background:#e1e1e1;"></div>
<svg class="a" style="left:125px;top:1410px" width="2420" height="25" viewBox="125 1410 2420 25"><path d="M143.5 1416 L136 1423 L143.5 1430Z" fill="#d9d9d9"/><path d="M2506 1416 L2513.5 1423 L2506 1430Z" fill="#d9d9d9"/></svg>
</body></html>
